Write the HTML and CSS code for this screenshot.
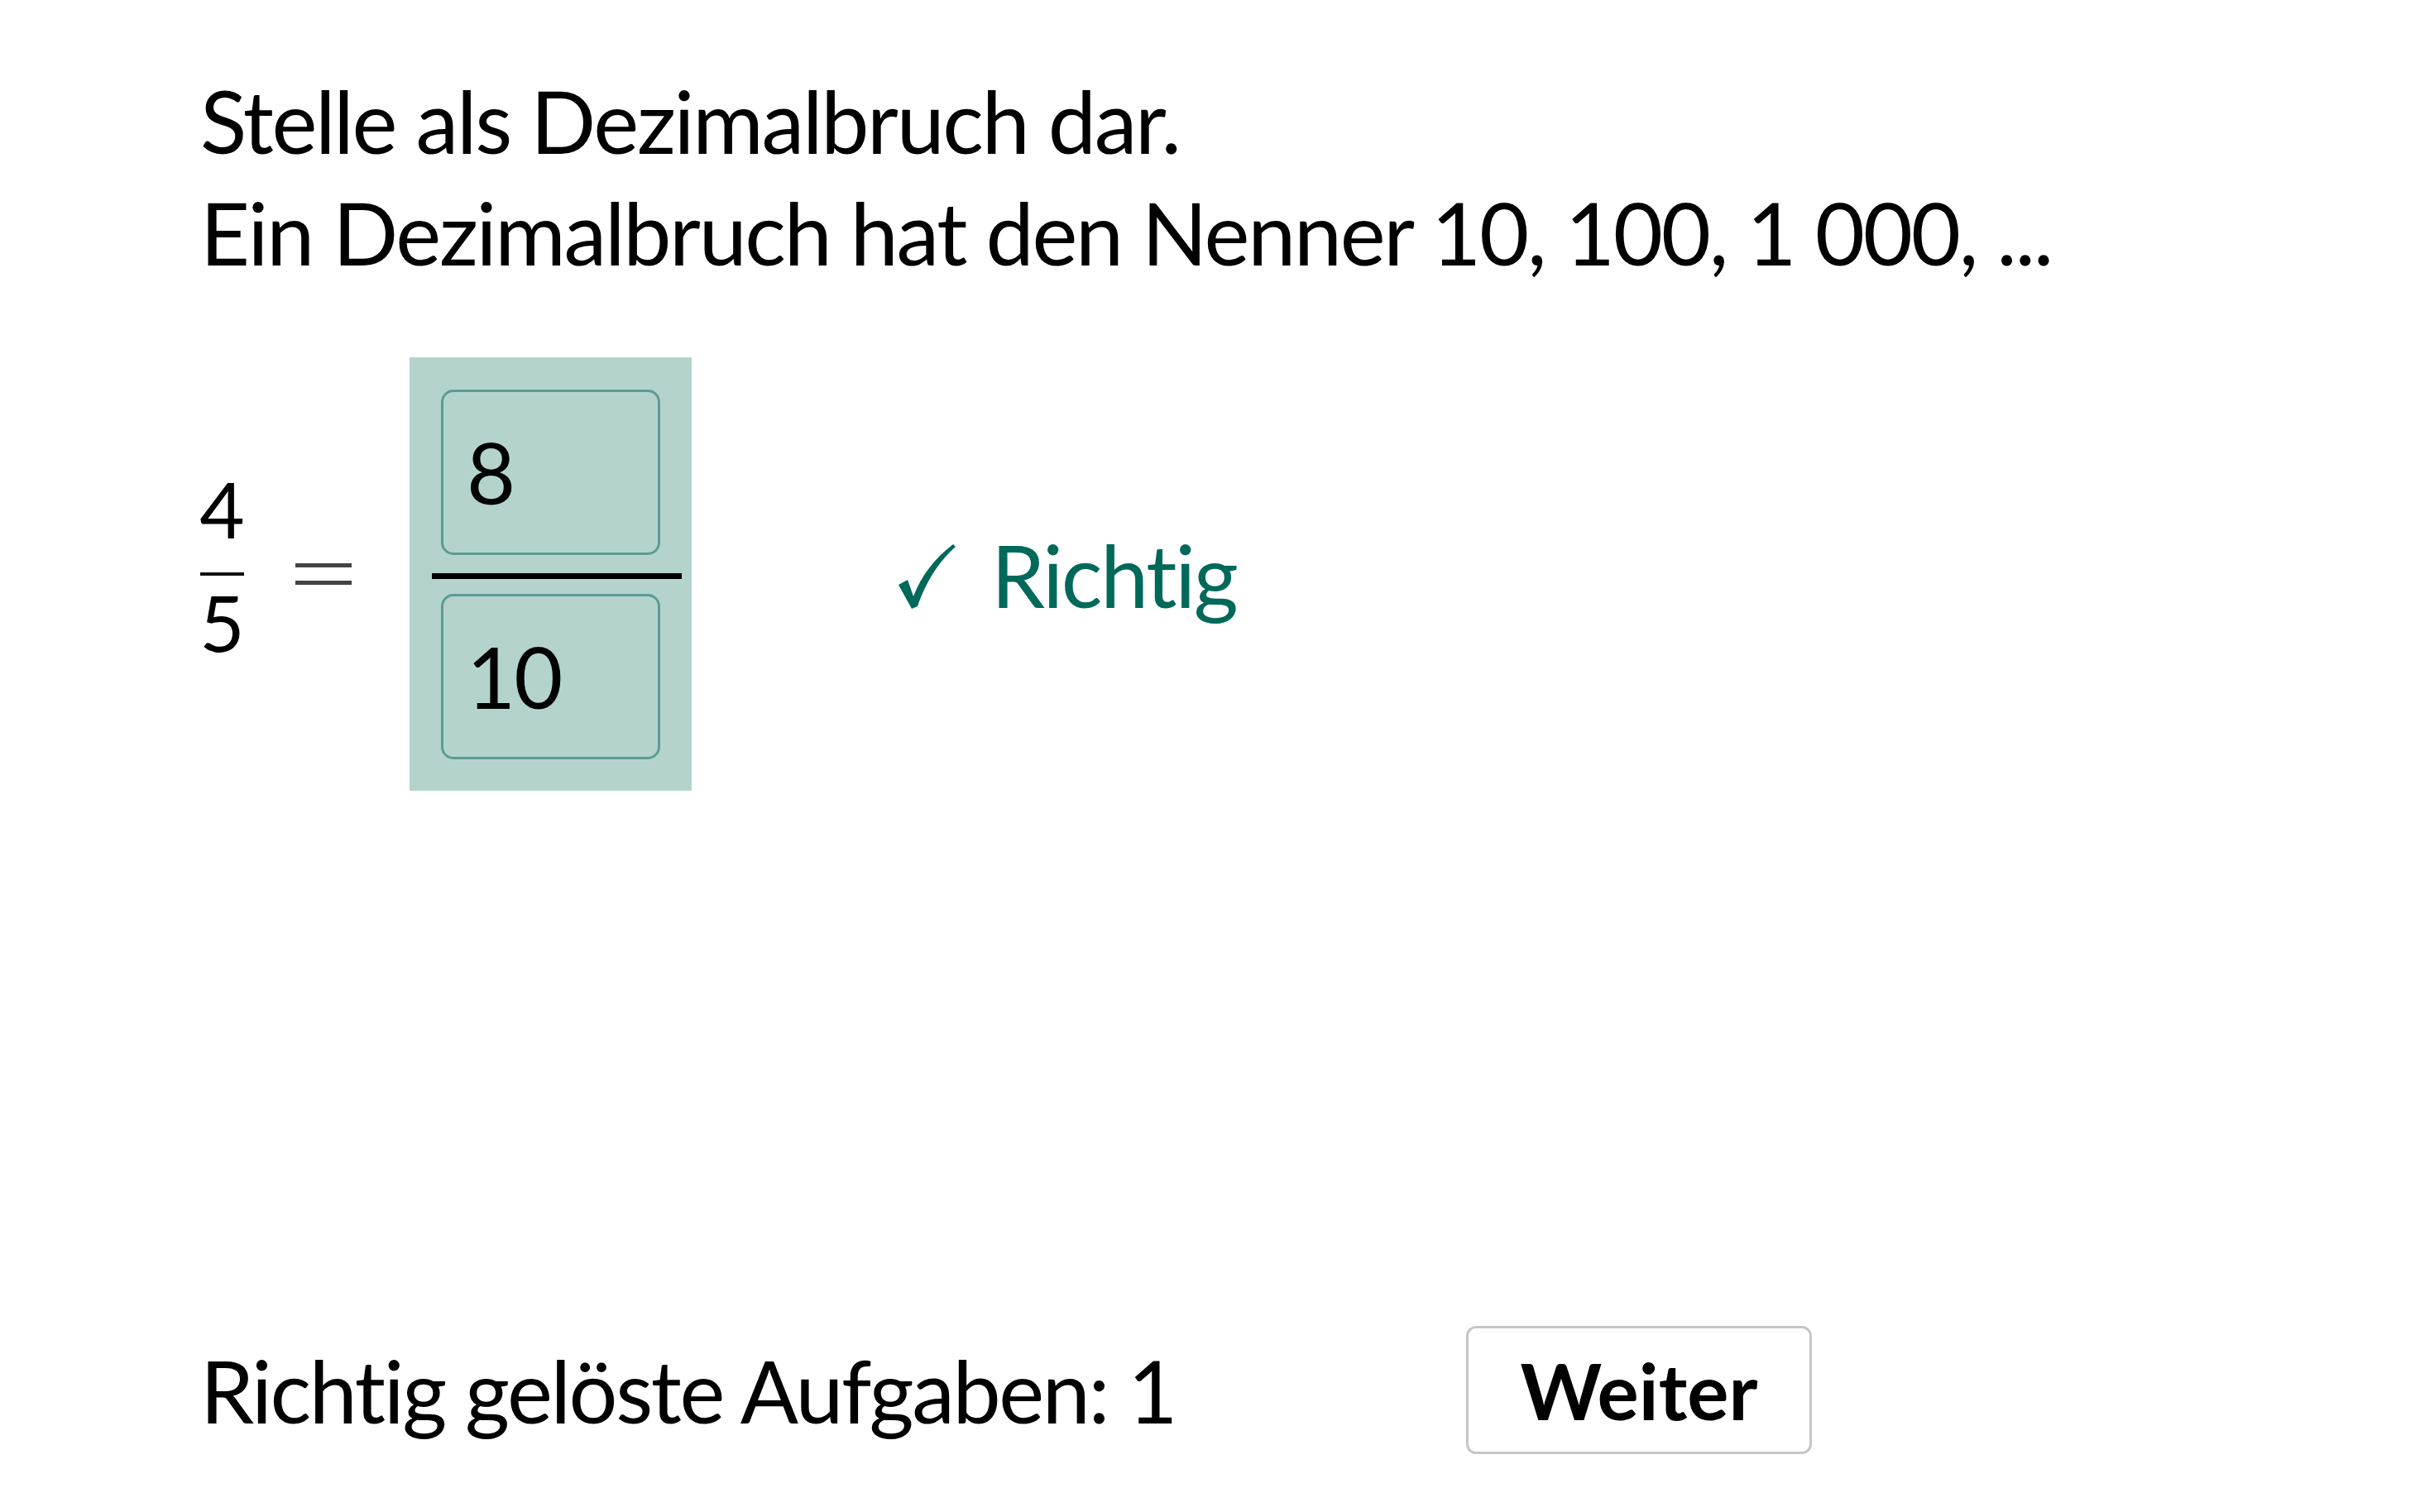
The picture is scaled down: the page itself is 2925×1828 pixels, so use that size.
FILE: index.html
```html
<!DOCTYPE html>
<html lang="de">
<head>
<meta charset="utf-8">
<title>Dezimalbruch</title>
<link rel="stylesheet" href="styles.css">
</head>
<body>
<main class="page">
  <p class="task">Stelle als Dezimalbruch dar.</p>
  <p class="task">Ein Dezimalbruch hat den Nenner 10, 100, 1&nbsp;000, ...</p>
  <div class="exercise">
    <span class="frac">
      <span class="num">4</span>
      <span class="fbar"></span>
      <span class="den">5</span>
    </span>
    <span class="eq"></span>
    <div class="answer">
      <div class="field">8</div>
      <div class="abar"></div>
      <div class="field">10</div>
    </div>
    <div class="feedback">
      <svg class="check" width="72" height="82" viewBox="0 0 72 82" aria-hidden="true">
        <path d="M2,52 L13,46 L20,66 C30,40 46,20 68,3 L71,6 C53,22 37,44 25,78 L18,81 Z" fill="#00695a"/>
      </svg>
      <span class="ok">Richtig</span>
    </div>
  </div>
  <div class="footer">
    <span class="score">Richtig gelöste Aufgaben: 1</span>
    <button class="next" type="button">Weiter</button>
  </div>
</main>
</body>
</html>
```
FILE: styles.css
```css
html, body {
  margin: 0;
  padding: 0;
  background: #ffffff;
}

body {
  font-family: Lato, "Open Sans", "DejaVu Sans", sans-serif;
  color: #000000;
}

.page {
  padding: 78px 0 0 242px;
}

.task {
  margin: 0;
  font-size: 104px;
  line-height: 135px;
  letter-spacing: -2.3px;
}

.exercise {
  display: flex;
  align-items: center;
  margin-top: 84px;
  height: 524px;
}

.frac {
  display: flex;
  flex-direction: column;
  align-items: center;
  width: 53px;
  font-size: 94px;
  line-height: 94px;
}

.num {
  padding-bottom: 30px;
}

.den {
  padding-top: 9px;
  padding-bottom: 21px;
}

.fbar {
  display: block;
  width: 53px;
  height: 4px;
  background: #111111;
}

.eq {
  display: block;
  width: 68px;
  height: 16px;
  margin-left: 62px;
  border-top: 5px solid #444444;
  border-bottom: 5px solid #444444;
}

.answer {
  display: flex;
  flex-direction: column;
  box-sizing: border-box;
  width: 341px;
  height: 524px;
  margin-left: 70px;
  padding: 39px 38px 38px 38px;
  background: #b4d3cd;
}

.field {
  display: flex;
  align-items: center;
  box-sizing: border-box;
  height: 200px;
  padding-left: 28px;
  border: 3px solid #5b9c91;
  border-radius: 15px;
  font-size: 102px;
  line-height: 1;
  letter-spacing: -2px;
}

.abar {
  height: 7px;
  margin: 22px -26px 18px -11px;
  background: #000000;
}

.feedback {
  display: flex;
  align-items: center;
  margin-left: 248px;
  color: #00695a;
  font-size: 104px;
  letter-spacing: -2.3px;
}

.check {
  display: block;
  margin-right: 42px;
  margin-top: 4px;
}

.footer {
  display: grid;
  grid-template-columns: 1530px 418px;
  align-items: center;
  margin-top: 647px;
}

.score {
  font-size: 104px;
  letter-spacing: -2.4px;
}

.next {
  box-sizing: border-box;
  width: 418px;
  height: 155px;
  padding: 0;
  background: #ffffff;
  border: 3px solid #c6c6c6;
  border-radius: 12px;
  font-family: Lato, "Open Sans", "DejaVu Sans", sans-serif;
  font-weight: 700;
  font-size: 94px;
  color: #000000;
}
```
